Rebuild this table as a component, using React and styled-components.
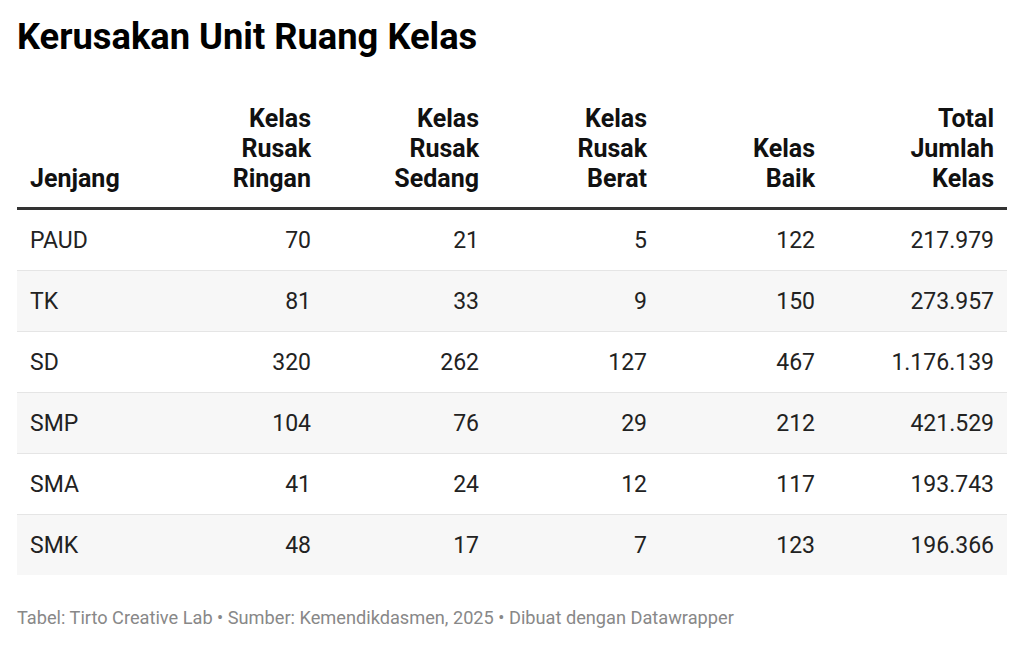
import React from "react";
import styled, { createGlobalStyle } from "styled-components";

const Global = createGlobalStyle`
  html, body { margin: 0; padding: 0; background: #fff; }
  body { font-family: Roboto, "Liberation Sans", sans-serif; }
`;

const Page = styled.div`
  width: 1024px;
  padding: 16px 17px 0 17px;
  box-sizing: border-box;
`;

const Title = styled.h1`
  margin: 0;
  font-size: 36.3px;
  line-height: 42px;
  font-weight: 700;
  color: #000;
`;

const Table = styled.table`
  width: 990px;
  margin-top: 46px;
  border-collapse: collapse;
  table-layout: fixed;
`;

const HeadCell = styled.th`
  padding: 0 13px 13px 13px;
  vertical-align: bottom;
  text-align: ${(p) => (p.$left ? "left" : "right")};
  font-size: 25px;
  font-weight: 700;
  line-height: 30px;
  color: #111;
  border-bottom: 3px solid #333;
`;

const Row = styled.tr`
  background: ${(p) => (p.$shade ? "#f7f7f7" : "#fff")};
  border-top: ${(p) => (p.$first ? "none" : "1px solid #e5e5e5")};
`;

const Cell = styled.td`
  height: 58px;
  padding: 2px 13px 0 13px;
  text-align: ${(p) => (p.$left ? "left" : "right")};
  font-size: 23px;
  color: #222;
  line-height: 26px;
`;

const Footer = styled.div`
  margin-top: 33px;
  font-size: 18.2px;
  line-height: 20px;
  color: #888;
`;

const rows = [
  ["PAUD", "70", "21", "5", "122", "217.979"],
  ["TK", "81", "33", "9", "150", "273.957"],
  ["SD", "320", "262", "127", "467", "1.176.139"],
  ["SMP", "104", "76", "29", "212", "421.529"],
  ["SMA", "41", "24", "12", "117", "193.743"],
  ["SMK", "48", "17", "7", "123", "196.366"],
];

const Col = styled.col`
  width: ${(p) => p.$w}px;
`;

const widths = [139, 168, 168, 168, 168, 179];

export default function App() {
  return (
    <Page>
      <Global />
      <Title>Kerusakan Unit Ruang Kelas</Title>
      <Table>
        <colgroup>
          {widths.map((w, i) => (
            <Col key={i} $w={w} />
          ))}
        </colgroup>
        <thead>
          <tr>
            <HeadCell $left>Jenjang</HeadCell>
            <HeadCell>Kelas<br />Rusak<br />Ringan</HeadCell>
            <HeadCell>Kelas<br />Rusak<br />Sedang</HeadCell>
            <HeadCell>Kelas<br />Rusak<br />Berat</HeadCell>
            <HeadCell>Kelas<br />Baik</HeadCell>
            <HeadCell>Total<br />Jumlah<br />Kelas</HeadCell>
          </tr>
        </thead>
        <tbody>
          {rows.map((r, i) => (
            <Row key={r[0]} $shade={i % 2 === 1} $first={i === 0}>
              {r.map((c, j) => (
                <Cell key={j} $left={j === 0}>{c}</Cell>
              ))}
            </Row>
          ))}
        </tbody>
      </Table>
      <Footer>Tabel: Tirto Creative Lab • Sumber: Kemendikdasmen, 2025 • Dibuat dengan Datawrapper</Footer>
    </Page>
  );
}
